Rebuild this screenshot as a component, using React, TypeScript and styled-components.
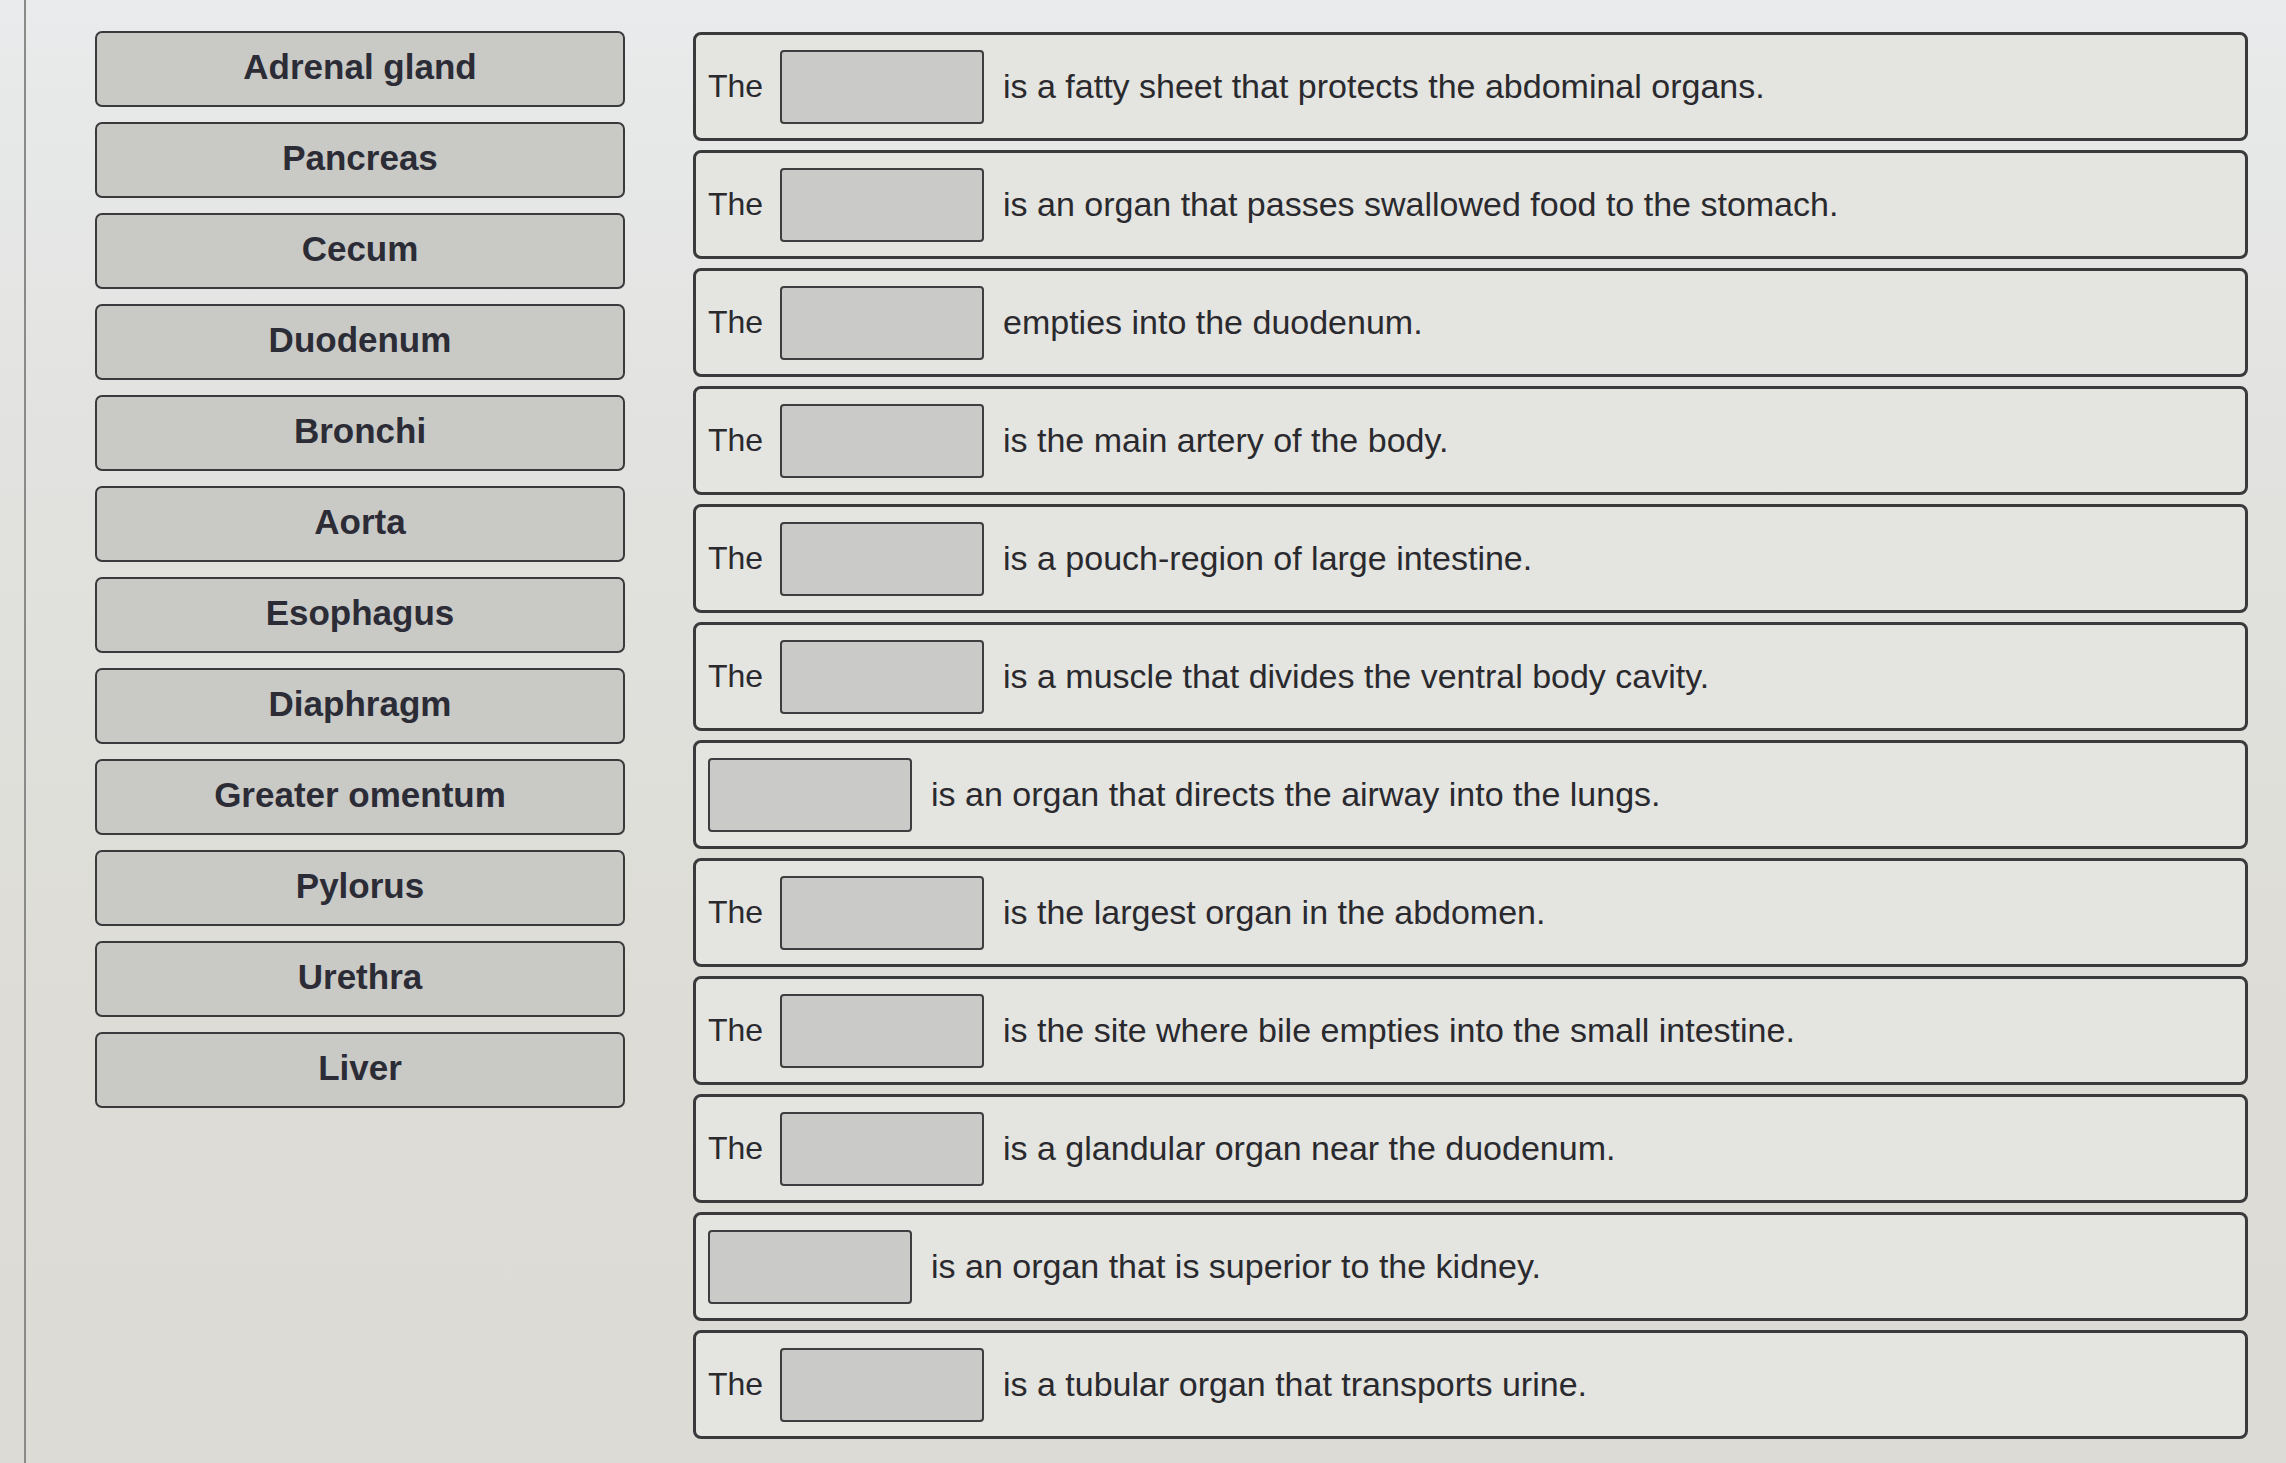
import React from "react"
import styled, { createGlobalStyle } from "styled-components"

const terms = [
	"Adrenal gland",
	"Pancreas",
	"Cecum",
	"Duodenum",
	"Bronchi",
	"Aorta",
	"Esophagus",
	"Diaphragm",
	"Greater omentum",
	"Pylorus",
	"Urethra",
	"Liver",
]

const sentences: { the: boolean; text: string }[] = [
	{ the: true, text: "is a fatty sheet that protects the abdominal organs." },
	{ the: true, text: "is an organ that passes swallowed food to the stomach." },
	{ the: true, text: "empties into the duodenum." },
	{ the: true, text: "is the main artery of the body." },
	{ the: true, text: "is a pouch-region of large intestine." },
	{ the: true, text: "is a muscle that divides the ventral body cavity." },
	{ the: false, text: "is an organ that directs the airway into the lungs." },
	{ the: true, text: "is the largest organ in the abdomen." },
	{ the: true, text: "is the site where bile empties into the small intestine." },
	{ the: true, text: "is a glandular organ near the duodenum." },
	{ the: false, text: "is an organ that is superior to the kidney." },
	{ the: true, text: "is a tubular organ that transports urine." },
]

const GlobalStyle = createGlobalStyle`
	html, body {
		margin: 0;
		padding: 0;
	}
	body {
		font-family: "Liberation Sans", Arial, sans-serif;
		background: linear-gradient(180deg, #e9ebec 0%, #e2e3e0 30%, #dddcd6 70%, #dcdbd5 100%);
		min-height: 1463px;
	}
`

const Page = styled.div`
	display: flex;
	height: 1463px;
	box-sizing: border-box;
	padding-left: 24px;
	overflow: hidden;
`

const TermPanel = styled.div`
	border-left: 2px solid #8a8a88;
	padding: 31px 68px 0 69px;
	display: flex;
	flex-direction: column;
	gap: 15px;
	width: 530px;
	flex-shrink: 0;
`

const Term = styled.div`
	height: 76px;
	box-sizing: border-box;
	border: 2px solid #3a3a3c;
	border-radius: 7px;
	background: #c9c9c6;
	display: flex;
	justify-content: center;
	align-items: center;
	padding-bottom: 4px;
	font-weight: 700;
	font-size: 35px;
	color: #2c2c36;
`

const SentencePanel = styled.div`
	display: flex;
	flex-direction: column;
	gap: 9px;
	padding-top: 32px;
	width: 1555px;
`

const Row = styled.div<{ $the: boolean }>`
	height: 109px;
	box-sizing: border-box;
	border: 3px solid #3a3a3c;
	border-radius: 8px;
	background: #e4e4e1;
	display: flex;
	align-items: center;
	padding-left: ${({ $the }) => ($the ? "12px" : "12px")};
	color: #2a2a2e;
	gap: 12px;
`

const The = styled.span`
	width: 60px;
	font-size: 32px;
`

const DropZone = styled.div`
	width: 204px;
	height: 74px;
	box-sizing: border-box;
	border: 2px solid #3e3e40;
	border-radius: 4px;
	background: #cacac8;
	flex-shrink: 0;
	margin-right: 7px;
`

const Text = styled.span`
	font-size: 34px;
`

const App = () => {
	return (
		<>
			<GlobalStyle />
			<Page>
				<TermPanel>
					{terms.map((t) => (
						<Term key={t}>{t}</Term>
					))}
				</TermPanel>
				<SentencePanel>
					{sentences.map((s, i) => (
						<Row key={i} $the={s.the}>
							{s.the && <The>The</The>}
							<DropZone />
							<Text>{s.text}</Text>
						</Row>
					))}
				</SentencePanel>
			</Page>
		</>
	)
}

export default App
